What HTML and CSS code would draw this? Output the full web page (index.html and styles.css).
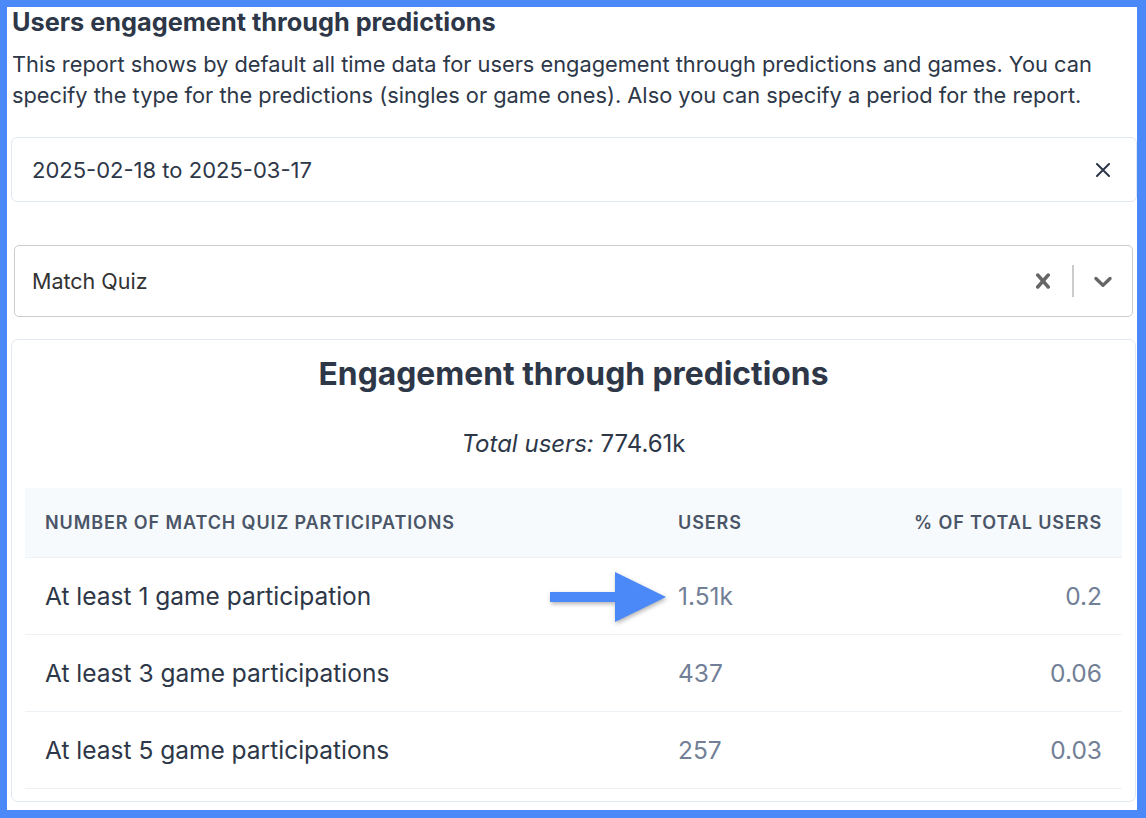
FILE: index.html
```html
<!DOCTYPE html>
<html lang="en">
<head>
  <meta charset="UTF-8" />
  <meta name="viewport" content="width=device-width, initial-scale=1.0"/>
  <title>Users engagement through predictions</title>
  <link rel="stylesheet" href="styles.css">
</head>
<body>
  <div class="frame">
    <h2 class="title">Users engagement through predictions</h2>
    <p class="intro">This report shows by default all time data for users engagement through predictions and games. You can specify the type for the predictions (singles or game ones). Also you can specify a period for the report.</p>

    <div class="date-range">
      <span>2025-02-18 to 2025-03-17</span>
      <button class="date-clear" aria-label="Clear dates">
        <svg viewBox="0 0 14 14" width="14" height="14"><path d="M1 1 L13 13 M13 1 L1 13" stroke="#2d3748" stroke-width="2" stroke-linecap="round" fill="none"/></svg>
      </button>
    </div>

    <div class="select">
      <div class="select-value">Match Quiz</div>
      <div class="indicator">
        <svg viewBox="0 0 20 20" width="30" height="30"><path fill="#666" d="M14.348 14.849c-0.469 0.469-1.229 0.469-1.697 0l-2.651-3.030-2.651 3.029c-0.469 0.469-1.229 0.469-1.697 0-0.469-0.469-0.469-1.229 0-1.697l2.758-3.15-2.759-3.152c-0.469-0.469-0.469-1.228 0-1.697s1.228-0.469 1.697 0l2.652 3.031 2.651-3.031c0.469-0.469 1.228-0.469 1.697 0s0.469 1.229 0 1.697l-2.758 3.152 2.758 3.150c0.469 0.469 0.469 1.229 0 1.698z"/></svg>
      </div>
      <span class="separator"></span>
      <div class="indicator">
        <svg viewBox="0 0 20 20" width="30" height="30"><path fill="#666" d="M4.516 7.548c0.436-0.446 1.043-0.481 1.576 0l3.908 3.747 3.908-3.747c0.533-0.481 1.141-0.446 1.574 0 0.436 0.445 0.408 1.197 0 1.615-0.406 0.418-4.695 4.502-4.695 4.502-0.217 0.223-0.502 0.335-0.787 0.335s-0.57-0.112-0.789-0.335c0 0-4.287-4.084-4.695-4.502s-0.436-1.17 0-1.615z"/></svg>
      </div>
    </div>

    <div class="card">
      <h2 class="card-title">Engagement through predictions</h2>
      <p class="total"><em>Total users:</em> 774.61k</p>

      <table class="stats">
        <thead>
          <tr>
            <th class="col-name">Number of Match Quiz participations</th>
            <th class="col-users">Users</th>
            <th class="num">% of total users</th>
          </tr>
        </thead>
        <tbody>
          <tr>
            <td>At least 1 game participation</td>
            <td class="col-users">
              1.51k
              <svg class="arrow" viewBox="0 0 120 56" width="120" height="56">
                <rect x="2" y="22" width="66" height="10" fill="#4a89f7"/>
                <polygon points="67,2 118,27 67,52" fill="#4a89f7"/>
              </svg>
            </td>
            <td class="num">0.2</td>
          </tr>
          <tr>
            <td>At least 3 game participations</td>
            <td class="col-users">437</td>
            <td class="num">0.06</td>
          </tr>
          <tr>
            <td>At least 5 game participations</td>
            <td class="col-users">257</td>
            <td class="num">0.03</td>
          </tr>
        </tbody>
      </table>
    </div>
  </div>
</body>
</html>
```

FILE: styles.css
```css
body {
  margin: 0;
  background-color: #4a89f7;
  font-family: Inter, "Noto Sans", sans-serif;
  color: #2d3748;
}

.frame {
  background-color: #fff;
  margin: 7px 9px 0 7px;
  height: 803px;
  overflow: hidden;
}

.title {
  margin: 0;
  padding: 1px 0 0 5px;
  font-size: 25.3px;
  line-height: 28px;
  font-weight: 700;
}

.intro {
  margin: 13px 0 0 5px;
  font-size: 21.8px;
  line-height: 31px;
}

.date-range {
  display: flex;
  align-items: center;
  justify-content: space-between;
  height: 63px;
  margin: 26px 0 0 4px;
  padding: 0 26px 0 20px;
  border: 1px solid #e2e8f0;
  border-radius: 6px;
  font-size: 22px;
}

.date-clear {
  border: none;
  background: none;
  padding: 0;
  display: flex;
  cursor: pointer;
}

.select {
  display: flex;
  align-items: center;
  height: 70px;
  margin: 43px 4px 0 7px;
  border: 1px solid #ccc;
  border-radius: 5px;
  color: #333;
  font-size: 21.5px;
}

.select-value {
  flex: 1;
  padding-left: 17px;
}

.indicator {
  display: flex;
  padding: 0 14px;
}

.separator {
  width: 2px;
  height: 32px;
  background-color: #ccc;
}

.card {
  margin: 22px 1px 0 4px;
  padding: 0 13px 12px 13px;
  border: 1px solid #e2e8f0;
  border-radius: 7px;
}

.card-title {
  margin: 0;
  padding-top: 14px;
  text-align: center;
  font-size: 31.8px;
  line-height: 40px;
  font-weight: 700;
}

.total {
  margin: 35px 0 0;
  text-align: center;
  font-size: 24px;
  line-height: 30px;
}

.stats {
  width: 100%;
  margin-top: 29px;
  border-collapse: collapse;
}

.stats th {
  height: 69px;
  padding: 0 20px;
  background-color: #f7fafc;
  border-bottom: 1px solid #edf2f7;
  color: #4a5568;
  font-size: 18px;
  font-weight: 600;
  letter-spacing: 0.05em;
  text-transform: uppercase;
  text-align: left;
}

.stats td {
  height: 76px;
  padding: 0 20px;
  border-bottom: 1px solid #edf2f7;
  font-size: 24.5px;
}

.stats .col-name {
  width: 593px;
}

.stats .col-users {
  width: 160px;
  color: #718096;
}

.stats th.col-users {
  color: #4a5568;
}

td.col-users {
  position: relative;
}

.stats .num {
  text-align: right;
  color: #718096;
}

.stats th.num {
  color: #4a5568;
}

.arrow {
  position: absolute;
  left: -110px;
  top: 12px;
  filter: drop-shadow(1px 2px 2px rgba(0, 0, 0, 0.3));
}
```
